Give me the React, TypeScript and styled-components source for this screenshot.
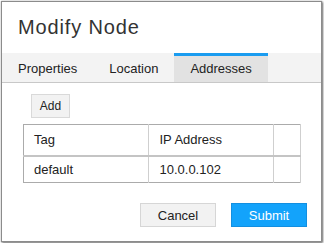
import { useState } from 'react';
import styled, { createGlobalStyle } from 'styled-components';

const GlobalStyle = createGlobalStyle`
    html, body {
        margin: 0;
        padding: 0;
        background: #fff;
    }

    body {
        font-family: 'Liberation Sans', Arial, sans-serif;
        color: #333;
    }

    * {
        box-sizing: border-box;
    }
`;

const Dialog = styled.div`
    display: flex;
    flex-direction: column;
    width: 321px;
    height: 241px;
    margin: 1px;
    background: #fff;
    border: 1px solid #8c8c8c;
    box-shadow: 1px 1px 2px rgba(0, 0, 0, 0.55), 0 0 1px rgba(0, 0, 0, 0.35);
`;

const Header = styled.h2`
    display: flex;
    align-items: center;
    height: 51px;
    margin: 0;
    padding-left: 16px;
    font-weight: 400;
    font-size: 20px;
    color: #333;
    letter-spacing: 0.85px;
`;

const TabBar = styled.div`
    display: flex;
    height: 30px;
    background: #f3f3f3;
    border-bottom: 1px solid #c8c8c8;
`;

const Tab = styled.button<{ active: boolean }>`
    display: flex;
    align-items: center;
    height: 29px;
    padding: 0 16px 2px;
    border: 0;
    border-top: 3px solid ${({ active }) => (active ? '#1a9cf0' : 'transparent')};
    background: ${({ active }) => (active ? '#e2e2e2' : 'transparent')};
    font-family: inherit;
    font-size: 13px;
    color: #222;
    cursor: pointer;
`;

const Body = styled.div`
    flex: 1;
    padding: 11px 20px 0 21px;
`;

const Toolbar = styled.div`
    display: flex;
    padding-left: 8px;
    margin-bottom: 6px;
`;

const SmallButton = styled.button`
    width: 39px;
    height: 24px;
    padding: 0;
    border: 1px solid #d9d9d9;
    background: #f2f2f2;
    font-family: inherit;
    font-size: 12px;
    color: #222;
`;

const Table = styled.table`
    width: 278px;
    border-collapse: collapse;
    border: 1px solid #ababab;
    font-size: 13px;
    color: #222;
`;

const HeadRow = styled.tr`
    height: 31px;
    border-bottom: 2px solid #c4c4c4;
`;

const Row = styled.tr`
    height: 27px;
    border-bottom: 1px solid #ababab;
`;

const Cell = styled.td<{ width: number }>`
    width: ${({ width }) => width}px;
    padding: 0 0 0 10px;
    border-right: 1px solid #cfcfcf;
    text-align: left;
    font-weight: 400;
    white-space: nowrap;
`;

const Footer = styled.div`
    display: flex;
    justify-content: flex-end;
    gap: 15px;
    padding: 0 14px 14px 0;
`;

const Button = styled.button<{ primary?: boolean }>`
    width: 76px;
    height: 24px;
    padding: 0;
    border: 1px solid ${({ primary }) => (primary ? '#138fe0' : '#d6d6d6')};
    background: ${({ primary }) => (primary ? '#13a3fb' : '#f2f2f2')};
    font-family: inherit;
    font-size: 13px;
    color: ${({ primary }) => (primary ? '#fff' : '#222')};
`;

const tabs = ['Properties', 'Location', 'Addresses'];

const addresses = [{ tag: 'default', ip: '10.0.0.102' }];

const App = () => {
    const [active, setActive] = useState('Addresses');

    return (
        <>
            <GlobalStyle />
            <Dialog>
                <Header>Modify Node</Header>
                <TabBar>
                    {tabs.map((name) => (
                        <Tab
                            key={name}
                            active={active === name}
                            onClick={() => setActive(name)}
                        >
                            {name}
                        </Tab>
                    ))}
                </TabBar>
                <Body>
                    <Toolbar>
                        <SmallButton type="button">Add</SmallButton>
                    </Toolbar>
                    <Table>
                        <thead>
                            <HeadRow>
                                <Cell as="th" width={126}>
                                    Tag
                                </Cell>
                                <Cell as="th" width={125}>
                                    IP Address
                                </Cell>
                                <Cell as="th" width={27} />
                            </HeadRow>
                        </thead>
                        <tbody>
                            {addresses.map((item) => (
                                <Row key={item.ip}>
                                    <Cell width={126}>{item.tag}</Cell>
                                    <Cell width={125}>{item.ip}</Cell>
                                    <Cell width={27} />
                                </Row>
                            ))}
                        </tbody>
                    </Table>
                </Body>
                <Footer>
                    <Button type="button">Cancel</Button>
                    <Button type="button" primary>
                        Submit
                    </Button>
                </Footer>
            </Dialog>
        </>
    );
};

export default App;
